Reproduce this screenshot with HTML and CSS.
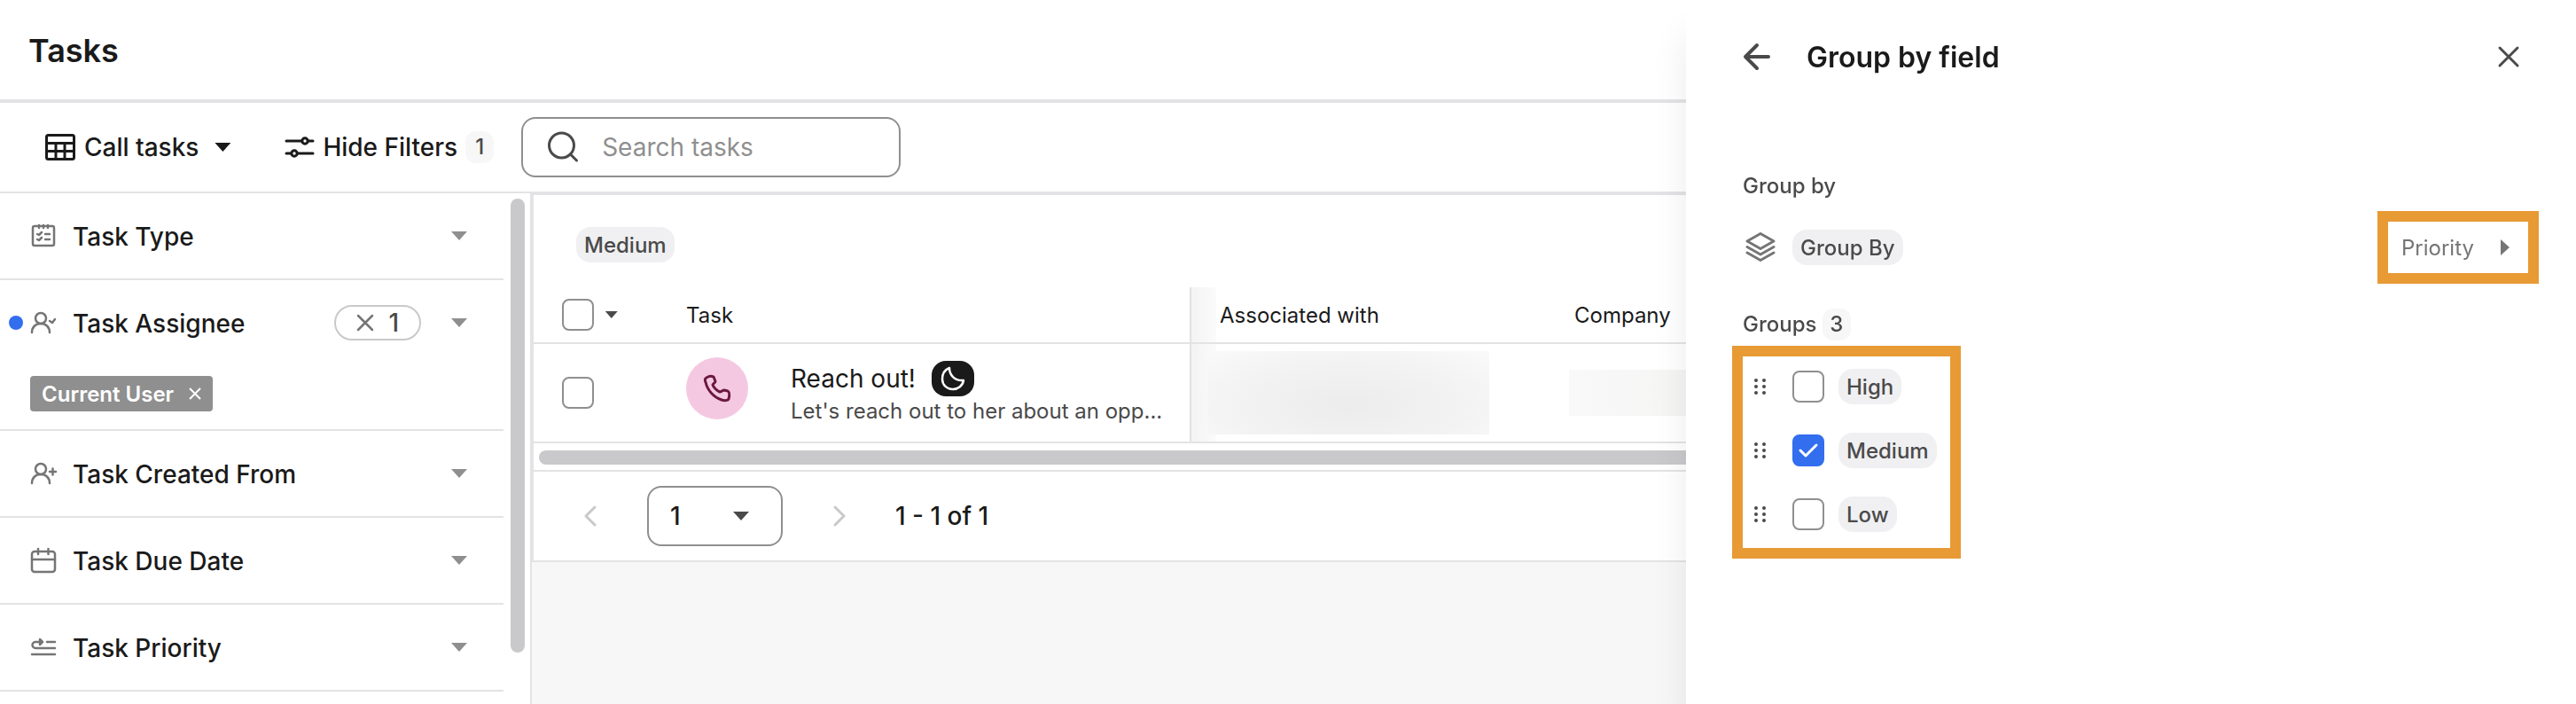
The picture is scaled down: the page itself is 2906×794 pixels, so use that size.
FILE: index.html
```html
<!DOCTYPE html>
<html lang="en">
<head>
    <meta charset="UTF-8">
    <meta name="viewport" content="width=device-width, initial-scale=1.0">
    <title>Tasks</title>
    <link rel="stylesheet" href="styles.css">
</head>
<body>

<header class="page-header">
    <h1>Tasks</h1>
</header>

<div class="toolbar">
    <button class="tool-btn view-btn" type="button">
        <svg width="34" height="34" viewBox="0 0 34 34" fill="none" stroke="currentColor" stroke-width="3">
            <rect x="1.500" y="3.500" width="31" height="27" rx="2"/>
            <path d="M2 12.500h30M2 21.500h30M12 12.500v18M22 12.500v18"/>
        </svg>
        Call tasks
        <span class="caret"></span>
    </button>
    <button class="tool-btn filter-btn" type="button">
        <svg width="34" height="26" viewBox="0 0 34 26" fill="none" stroke="currentColor" stroke-width="3" stroke-linecap="round">
            <path d="M2 6h17M27 6h5M2 20h5M15 20h17"/>
            <circle cx="23" cy="6" r="3.200"/>
            <circle cx="11" cy="20" r="3.200"/>
        </svg>
        Hide Filters
        <span class="count">1</span>
    </button>
    <label class="search">
        <svg width="36" height="36" viewBox="0 0 36 36" fill="none" stroke="currentColor" stroke-width="3" stroke-linecap="round">
            <circle cx="16.500" cy="16" r="14"/>
            <path d="M26.500 26l7 7"/>
        </svg>
        <input type="text" placeholder="Search tasks" aria-label="Search tasks">
    </label>
</div>

<div class="workspace">
    <aside class="sidebar">
        <div class="filters">
            <div class="filter">
                <button class="filter-row" type="button">
                    <svg width="28" height="28" viewBox="0 0 28 28" fill="none" stroke="currentColor" stroke-width="2.500" stroke-linecap="round" stroke-linejoin="round">
                        <rect x="3" y="3" width="24" height="22" rx="2"/>
                        <path d="M10 2v3M15 2v3M20 2v3M8 12l2 1 3-3M17 12h5M8 18l2 1 3-3M17 18h5"/>
                    </svg>
                    <span class="filter-name">Task Type</span>
                    <span class="caret"></span>
                </button>
            </div>
            <div class="filter active">
                <div class="filter-row">
                    <svg width="28" height="28" viewBox="0 0 28 28" fill="none" stroke="currentColor" stroke-width="2.500" stroke-linecap="round" stroke-linejoin="round">
                        <circle cx="12" cy="9" r="6"/>
                        <path d="M2 25c0-6 4-10 10-10s10 4 10 10M22 12l3 2 3-4"/>
                    </svg>
                    <span class="filter-name">Task Assignee</span>
                    <button class="clear-btn" type="button">
                        <svg width="20" height="20" viewBox="0 0 20 20" stroke="currentColor" stroke-width="2.500" stroke-linecap="round"><path d="M2 2l16 16M18 2L2 18"/></svg>
                        1
                    </button>
                    <span class="caret"></span>
                </div>
                <button class="tag" type="button">
                    Current User
                    <svg width="14" height="14" viewBox="0 0 14 14" stroke="currentColor" stroke-width="2"><path d="M1 1l12 12M13 1L1 13"/></svg>
                </button>
            </div>
            <div class="filter">
                <button class="filter-row" type="button">
                    <svg width="28" height="28" viewBox="0 0 28 28" fill="none" stroke="currentColor" stroke-width="2.500" stroke-linecap="round" stroke-linejoin="round">
                        <circle cx="12" cy="9" r="6"/>
                        <path d="M2 25c0-6 4-10 10-10s10 4 10 10M22 12h7M25.500 8.500v7"/>
                    </svg>
                    <span class="filter-name">Task Created From</span>
                    <span class="caret"></span>
                </button>
            </div>
            <div class="filter">
                <button class="filter-row" type="button">
                    <svg width="28" height="28" viewBox="0 0 28 28" fill="none" stroke="currentColor" stroke-width="2.500" stroke-linecap="round">
                        <rect x="2" y="4" width="26" height="23" rx="3"/>
                        <path d="M2 13h26M9 1v6M20.500 1v6"/>
                    </svg>
                    <span class="filter-name">Task Due Date</span>
                    <span class="caret"></span>
                </button>
            </div>
            <div class="filter">
                <button class="filter-row" type="button">
                    <svg width="28" height="28" viewBox="0 0 28 28" fill="none" stroke="currentColor" stroke-width="2.500" stroke-linecap="round" stroke-linejoin="round">
                        <path d="M19 8h9M28 15H6a3.500 3.500 0 0 1 0-7h5M28 22H2"/>
                        <path d="M11 5l3 3-3 3z" fill="currentColor"/>
                    </svg>
                    <span class="filter-name">Task Priority</span>
                    <span class="caret"></span>
                </button>
            </div>
        </div>
        <div class="scrollbar-y"></div>
    </aside>

    <main class="content">
        <section class="board">
            <div class="group-title"><span class="badge">Medium</span></div>
            <table class="tasks">
                <colgroup>
                    <col class="col-check">
                    <col class="col-task">
                    <col class="col-assoc">
                    <col class="col-company">
                </colgroup>
                <thead>
                    <tr>
                        <th class="check-cell">
                            <input class="checkbox" type="checkbox" aria-label="Select all">
                            <span class="caret caret-small"></span>
                        </th>
                        <th class="task-head">Task</th>
                        <th class="after-sticky">Associated with</th>
                        <th>Company</th>
                    </tr>
                </thead>
                <tbody>
                    <tr>
                        <td class="check-cell"><input class="checkbox" type="checkbox" aria-label="Select task"></td>
                        <td class="task-cell">
                            <div class="task">
                                <span class="task-icon">
                                    <svg width="32" height="32" viewBox="0 0 32 32" fill="none" stroke="currentColor" stroke-width="3" stroke-linejoin="round">
                                        <path d="M4 4C7 2 10 2 12 3L14 8C14 10 12 10 11 12C12 15 16 19 19 20C21 20 22 18 24 18L28 19C30 20 30 24 29 28C28 30 24 30 21 29C12 26 5 18 3 9C2 7 2 5 4 4Z"/>
                                    </svg>
                                </span>
                                <div class="task-text">
                                    <div class="task-name">
                                        Reach out!
                                        <span class="snooze">
                                            <svg width="30" height="30" viewBox="0 0 30 30" fill="none" stroke="currentColor" stroke-width="2.500" stroke-linejoin="round">
                                                <path d="M11 3C11 11 17 18 27 17C26 23 21 27 15 27C8 27 3 22 3 15.500C3 9 6 5 11 3Z"/>
                                            </svg>
                                        </span>
                                    </div>
                                    <div class="task-note">Let's reach out to her about an opp...</div>
                                </div>
                            </div>
                        </td>
                        <td class="after-sticky redacted-cell"><div class="redacted"></div></td>
                        <td class="company-cell"><div class="redacted redacted-small"></div></td>
                    </tr>
                </tbody>
            </table>
            <div class="scroll-track"><div class="scrollbar-x"></div></div>
            <nav class="pager">
                <button class="page-btn" type="button" aria-label="Previous page">
                    <svg width="16" height="26" viewBox="0 0 16 26" fill="none" stroke="currentColor" stroke-width="3" stroke-linecap="round" stroke-linejoin="round"><path d="M13 3L3 13l10 10"/></svg>
                </button>
                <div class="page-select">
                    <select aria-label="Page"><option>1</option></select>
                    <span class="caret"></span>
                </div>
                <button class="page-btn" type="button" aria-label="Next page">
                    <svg width="16" height="26" viewBox="0 0 16 26" fill="none" stroke="currentColor" stroke-width="3" stroke-linecap="round" stroke-linejoin="round"><path d="M3 3l10 10L3 23"/></svg>
                </button>
                <span class="page-info">1 - 1 of 1</span>
            </nav>
        </section>
    </main>
</div>

<aside class="drawer">
    <div class="drawer-head">
        <button class="icon-btn" type="button" aria-label="Back">
            <svg width="32" height="32" viewBox="0 0 32 32" fill="none" stroke="currentColor" stroke-width="4" stroke-linecap="round" stroke-linejoin="round"><path d="M29 16H3M16 3L3 16l13 13"/></svg>
        </button>
        <h2>Group by field</h2>
        <button class="icon-btn" type="button" aria-label="Close">
            <svg width="24" height="24" viewBox="0 0 24 24" stroke="currentColor" stroke-width="3" stroke-linecap="round"><path d="M2 2l20 20M22 2L2 22"/></svg>
        </button>
    </div>

    <h3 class="drawer-label">Group by</h3>
    <div class="group-by">
        <svg width="36" height="36" viewBox="0 0 36 36" fill="none" stroke="currentColor" stroke-width="3" stroke-linecap="round" stroke-linejoin="round">
            <path d="M18 2.500l15 8.500-15 8.500L3 11zM3 17.500l15 8.500 15-8.500M3 24l15 8.500L33 24"/>
        </svg>
        <span class="badge">Group By</span>
        <button class="highlight field-btn" type="button">
            Priority
            <span class="caret-right"></span>
        </button>
    </div>

    <h3 class="drawer-label">Groups <span class="count">3</span></h3>
    <ul class="highlight group-list">
        <li>
            <svg class="grip" width="16" height="20" viewBox="0 0 16 20" fill="currentColor"><circle cx="3" cy="3" r="2"/><circle cx="12" cy="3" r="2"/><circle cx="3" cy="10" r="2"/><circle cx="12" cy="10" r="2"/><circle cx="3" cy="17" r="2"/><circle cx="12" cy="17" r="2"/></svg>
            <input class="checkbox" type="checkbox" id="group-high">
            <label class="badge" for="group-high">High</label>
        </li>
        <li>
            <svg class="grip" width="16" height="20" viewBox="0 0 16 20" fill="currentColor"><circle cx="3" cy="3" r="2"/><circle cx="12" cy="3" r="2"/><circle cx="3" cy="10" r="2"/><circle cx="12" cy="10" r="2"/><circle cx="3" cy="17" r="2"/><circle cx="12" cy="17" r="2"/></svg>
            <span class="check-wrap">
                <input class="checkbox" type="checkbox" id="group-medium" checked>
                <svg class="tick" width="24" height="20" viewBox="0 0 24 20" fill="none" stroke="currentColor" stroke-width="3" stroke-linecap="round" stroke-linejoin="round"><path d="M3 10l6 6L21 4"/></svg>
            </span>
            <label class="badge" for="group-medium">Medium</label>
        </li>
        <li>
            <svg class="grip" width="16" height="20" viewBox="0 0 16 20" fill="currentColor"><circle cx="3" cy="3" r="2"/><circle cx="12" cy="3" r="2"/><circle cx="3" cy="10" r="2"/><circle cx="12" cy="10" r="2"/><circle cx="3" cy="17" r="2"/><circle cx="12" cy="17" r="2"/></svg>
            <input class="checkbox" type="checkbox" id="group-low">
            <label class="badge" for="group-low">Low</label>
        </li>
    </ul>
</aside>

</body>
</html>
```

FILE: styles.css
```css
* {
    box-sizing: border-box;
}

body {
    margin: 0;
    height: 100vh;
    overflow: hidden;
    display: flex;
    flex-direction: column;
    font-family: Inter, "Liberation Sans", sans-serif;
    font-size: 28px;
    font-weight: 500;
    color: #1a1a1a;
    background: #fff;
}

button,
input,
select {
    font: inherit;
    color: inherit;
    background: none;
    border: none;
    margin: 0;
    padding: 0;
}

button {
    cursor: pointer;
}

h1,
h2,
h3 {
    margin: 0;
}

svg {
    flex: none;
    display: block;
    overflow: visible;
}

.page-header {
    flex: none;
    height: 116px;
    padding: 32px;
    border-bottom: 4px solid #e3e3e5;
}

.page-header h1 {
    font-size: 36px;
    font-weight: 600;
    line-height: 50px;
}

/* toolbar */
.toolbar {
    flex: none;
    display: flex;
    align-items: center;
    height: 102px;
    padding-left: 51px;
    border-bottom: 2px solid #e3e3e5;
}

.tool-btn {
    display: flex;
    align-items: center;
    gap: 10px;
    white-space: nowrap;
}

.view-btn {
    margin-right: 61px;
}

.view-btn .caret {
    margin-left: 8px;
}

.filter-btn {
    gap: 9px;
    margin-right: 31px;
}

.caret {
    flex: none;
    width: 18px;
    height: 10px;
    background: currentColor;
    clip-path: polygon(0 0, 100% 0, 50% 100%);
}

.caret-small {
    width: 14px;
    height: 8px;
    color: #4a4a4a;
}

.caret-right {
    width: 10px;
    height: 18px;
    background: currentColor;
    clip-path: polygon(0 0, 100% 50%, 0 100%);
}

.count {
    display: inline-block;
    width: 32px;
    border-radius: 12px;
    background: #f7f7f8;
    color: #4a4a4a;
    font-size: 24px;
    line-height: 36px;
    text-align: center;
}

.search {
    display: flex;
    align-items: center;
    gap: 26px;
    width: 428px;
    height: 68px;
    padding: 0 27px;
    border: 2px solid #8f8f8f;
    border-radius: 16px;
    color: #4a4a4a;
}

.search input {
    flex: 1;
    min-width: 0;
    outline: none;
    font-weight: 400;
}

.search input::placeholder {
    color: #8f8f8f;
    opacity: 1;
}

/* filters */
.workspace {
    flex: 1;
    min-height: 0;
    display: flex;
}

.sidebar {
    flex: none;
    display: flex;
    width: 600px;
    overflow: hidden;
    border-right: 2px solid #e3e3e5;
}

.filters {
    width: 568px;
}

.filter {
    border-bottom: 2px solid #e3e3e5;
}

.filter-row {
    display: flex;
    align-items: center;
    gap: 20px;
    width: 100%;
    height: 96px;
    padding: 0 41px 0 34px;
    text-align: left;
}

.filter-row svg {
    color: #757575;
}

.filter-name {
    flex: 1;
    padding-top: 2px;
}

.filter-row .caret {
    color: #8f8f8f;
}

.active {
    position: relative;
    padding-bottom: 20px;
}

.active::before {
    content: "";
    position: absolute;
    left: 10px;
    top: 40px;
    width: 16px;
    height: 16px;
    border-radius: 50%;
    background: #326eee;
}

.clear-btn {
    display: flex;
    align-items: center;
    gap: 16px;
    height: 40px;
    margin-right: 14px;
    padding: 0 23px;
    border: 2px solid #c9c9cb;
    border-radius: 20px;
    color: #4a4a4a;
}

.tag {
    display: flex;
    align-items: center;
    gap: 17px;
    height: 40px;
    margin: 12px 0 0 34px;
    padding: 0 13px;
    border-radius: 4px;
    background: #8f8f8f;
    color: #fff;
    font-size: 24px;
    font-weight: 600;
}

.scrollbar-y {
    width: 16px;
    height: 512px;
    margin: 6px 0 0 8px;
    border-radius: 8px;
    background: #c9c9cb;
}

/* task table */
.content {
    flex: 1;
    min-width: 0;
    background: #f7f7f7;
}

.board {
    border: 2px solid #e3e3e5;
    background: #fff;
}

.group-title {
    height: 104px;
    padding: 36px 48px 0;
}

.badge {
    display: inline-block;
    padding: 2px 9px 0;
    border-radius: 16px;
    background: #f0f0f2;
    color: #4a4a4a;
    font-size: 24px;
    line-height: 38px;
}

.tasks {
    width: 100%;
    table-layout: fixed;
    border-spacing: 0;
    font-size: 24px;
}

.col-check {
    width: 140px;
}

.col-task {
    width: 602px;
}

.col-assoc {
    width: 400px;
}

.tasks th,
.tasks td {
    height: 64px;
    padding: 0 32px;
    border-bottom: 2px solid #e3e3e5;
    font-weight: 400;
    text-align: left;
}

.tasks td {
    height: 112px;
}

.tasks .task-head,
.tasks .task-cell {
    border-right: 2px solid #e3e3e5;
}

.tasks .task-cell {
    padding: 15px 0 0 32px;
    vertical-align: top;
}

.tasks .check-cell {
    padding-right: 0;
}

.check-cell .checkbox,
.check-cell .caret {
    display: inline-block;
    vertical-align: middle;
}

.check-cell .caret {
    margin-left: 6px;
}

.checkbox {
    appearance: none;
    display: block;
    flex: none;
    width: 36px;
    height: 36px;
    border: 2px solid #8f8f8f;
    border-radius: 8px;
    background: #fff;
}

.checkbox:checked {
    border-color: #326eee;
    background: #326eee;
}

.after-sticky {
    background: linear-gradient(to right, #f3f3f3, #fbfbfb) no-repeat left / 28px 100%;
}

.task {
    display: flex;
    gap: 48px;
}

.task-icon {
    display: flex;
    align-items: center;
    justify-content: center;
    width: 70px;
    height: 70px;
    border-radius: 50%;
    background: #f5c8e1;
    color: #6b1840;
}

.task-text {
    padding-top: 4px;
}

.task-name {
    display: flex;
    align-items: center;
    gap: 18px;
    font-size: 28px;
    line-height: 40px;
}

.snooze {
    display: flex;
    align-items: center;
    justify-content: center;
    width: 48px;
    height: 40px;
    border-radius: 16px;
    background: #1a1a1a;
    color: #fff;
}

.task-note {
    color: #4a4a4a;
    line-height: 34px;
}

.tasks .redacted-cell {
    padding: 0 64px 0 18px;
}

.tasks .company-cell {
    padding: 0 26px;
}

.redacted {
    height: 94px;
    background: radial-gradient(ellipse at 50% 65%, #ececec, #f3f3f3 60%, #fafafa);
}

.redacted-small {
    width: 200px;
    height: 52px;
    background: linear-gradient(to right, #f9f9f9, #f4f3f2);
}

.scroll-track {
    height: 32px;
    padding: 8px 6px 6px;
    border-bottom: 2px solid #e3e3e5;
}

.scrollbar-x {
    height: 16px;
    border-radius: 8px;
    background: #c9c9cb;
}

.pager {
    display: flex;
    align-items: center;
    height: 100px;
    padding-left: 56px;
}

.page-btn {
    color: #c9c9cb;
}

.page-select {
    display: flex;
    align-items: center;
    width: 153px;
    height: 68px;
    margin: 0 56px;
    border: 2px solid #8f8f8f;
    border-radius: 16px;
    color: #4a4a4a;
}

.page-select select {
    appearance: none;
    flex: 1;
    padding-left: 24px;
    color: #1a1a1a;
}

.page-select .caret {
    margin-right: 36px;
}

.page-info {
    margin-left: 55px;
}

/* drawer */
.drawer {
    position: fixed;
    top: 0;
    right: 0;
    bottom: 0;
    width: 1004px;
    padding: 32px 42px 0 52px;
    background: #fff;
    box-shadow: 0 40px 40px rgba(0, 0, 0, 0.08);
    color: #4a4a4a;
}

.drawer-head {
    display: flex;
    align-items: center;
    height: 64px;
    padding: 0 22px 0 12px;
    margin-bottom: 96px;
}

.drawer-head h2 {
    flex: 1;
    margin-left: 40px;
    color: #1a1a1a;
    font-size: 32px;
    font-weight: 600;
}

.drawer-label {
    padding-left: 12px;
    font-size: 24px;
    font-weight: 500;
    line-height: 36px;
}

.group-by {
    display: flex;
    align-items: center;
    margin: 10px 0 28px;
    padding-left: 14px;
}

.group-by svg {
    color: #757575;
    margin-right: 18px;
}

.highlight {
    border: 12px solid #e89a35;
}

.field-btn {
    display: flex;
    align-items: center;
    gap: 30px;
    height: 82px;
    margin-left: auto;
    padding: 0 21px 0 15px;
    color: #757575;
    font-size: 24px;
    font-weight: 400;
}

.group-list {
    display: flex;
    flex-direction: column;
    gap: 32px;
    width: 258px;
    height: 240px;
    margin: 6px 0 0;
    padding: 14px 12px;
    list-style: none;
}

.group-list li {
    display: flex;
    align-items: center;
    gap: 16px;
    height: 40px;
}

.grip {
    margin-right: 12px;
}

.check-wrap {
    display: grid;
    place-items: center;
}

.check-wrap > * {
    grid-area: 1 / 1;
}

.tick {
    position: relative;
    color: #fff;
    pointer-events: none;
}
```
